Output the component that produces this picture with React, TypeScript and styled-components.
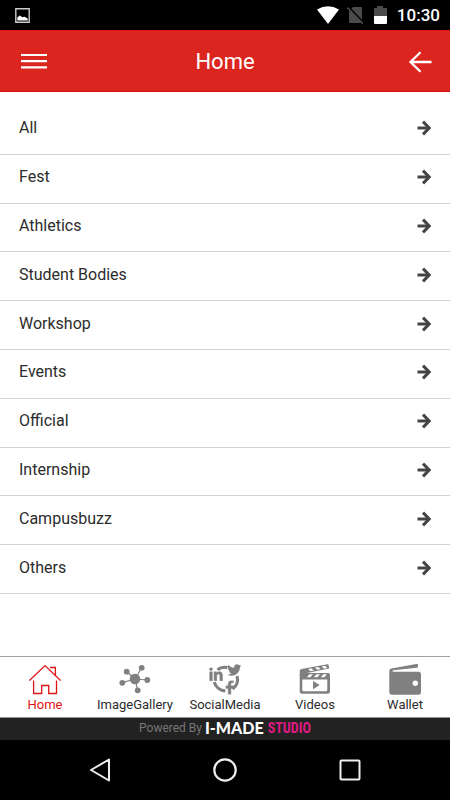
import React from "react";
import styled, { createGlobalStyle } from "styled-components";
import { FaFacebookF, FaLinkedinIn, FaTwitter } from "react-icons/fa";

const GlobalStyle = createGlobalStyle`
  *, *::before, *::after { box-sizing: border-box; }
  body {
    margin: 0;
    background: #fff;
    color: #222;
    font-family: Roboto, "Liberation Sans", sans-serif;
  }
`;

const Page = styled.div`
  display: flex;
  flex-direction: column;
  min-height: 100vh;
`;

const StatusBar = styled.div`
  display: flex;
  align-items: center;
  justify-content: space-between;
  height: 30px;
  padding: 0 10px 0 14px;
  background: #000;
`;

const StatusGroup = styled.div`
  display: flex;
  align-items: center;
  gap: 8px;
`;

const Clock = styled.time`
  color: #fff;
  font-size: 17px;
  font-weight: 500;
  line-height: 30px;
`;

const Header = styled.header`
  display: grid;
  grid-template-columns: 34px 1fr 34px;
  align-items: center;
  padding: 2px 13px 0 17px;
  height: 62px;
  background: #db261f;
  border-top: 1px solid #e5140f;
  border-bottom: 1px solid #d8100c;
`;

const Title = styled.h1`
  margin: 0;
  padding-right: 4px;
  color: #fff;
  font-size: 22px;
  font-weight: 400;
  line-height: 32px;
  text-align: center;
`;

const IconButton = styled.button`
  display: grid;
  place-items: center;
  width: 34px;
  height: 34px;
  padding: 0;
  border: 0;
  background: none;
  color: #fff;
  cursor: pointer;
`;

const Main = styled.main`
  flex: 1;
  padding: 14px 0 16px;
`;

const CategoryList = styled.ul`
  display: grid;
  grid-auto-rows: 1fr;
  min-height: 488px;
  margin: 0;
  padding: 0;
  list-style: none;
`;

const CategoryItem = styled.li`
  display: flex;
  border-bottom: 1px solid #d2d2d2;
`;

const CategoryLink = styled.a`
  flex: 1;
  display: flex;
  align-items: center;
  justify-content: space-between;
  padding: 0 18px 3px 19px;
  color: #2c2c2c;
  font-size: 16px;
  line-height: 24px;
  text-decoration: none;
`;

const TabBar = styled.nav`
  display: grid;
  grid-template-columns: repeat(5, 1fr);
  background: #fff;
  border-top: 1px solid #a0a0a0;
  border-bottom: 1px solid #8f9492;
`;

const Tab = styled.a<{ $active?: boolean }>`
  display: flex;
  flex-direction: column;
  align-items: center;
  gap: 2px;
  padding: 6px 0 4px;
  color: ${(p) => (p.$active ? "#dc1414" : "#2c2c2c")};
  font-size: 13px;
  line-height: 16px;
  text-decoration: none;
`;

const TabIcon = styled.svg<{ $active?: boolean }>`
  display: block;
  width: 32px;
  height: 32px;
  color: ${(p) => (p.$active ? "#dc1414" : "#808080")};
`;

const Credit = styled.footer`
  display: flex;
  align-items: center;
  justify-content: center;
  gap: 3px;
  height: 22px;
  padding-bottom: 3px;
  background: #222;
  color: #777;
  font-size: 12px;
  line-height: 20px;
`;

const Brand = styled.strong`
  display: flex;
  gap: 4px;
  color: #fff;
  font-family: Lato, sans-serif;
  font-size: 16px;
  font-weight: 900;
  line-height: 20px;
`;

const BrandAccent = styled.span`
  color: #df1a83;
  font-family: "Roboto Condensed", Roboto, sans-serif;
  font-size: 14px;
  font-weight: 700;
`;

const SystemNav = styled.nav`
  display: flex;
  align-items: center;
  justify-content: space-between;
  height: 60px;
  padding: 0 83px;
  background: #000;
`;

const categories = [
  "All",
  "Fest",
  "Athletics",
  "Student Bodies",
  "Workshop",
  "Events",
  "Official",
  "Internship",
  "Campusbuzz",
  "Others",
];

const HomeIcon = () => (
  <TabIcon $active viewBox="0 0 32 32" fill="none" stroke="currentColor" strokeWidth="1.3" aria-hidden="true">
    <path d="M.4 17.6 16 2.6l15.6 15M21 4.5h5.4v7.4M4.6 17.6v12.9h8.1v-8h7v8h7.8V17.6" />
  </TabIcon>
);

const GalleryIcon = () => (
  <TabIcon viewBox="0 0 32 32" fill="currentColor" aria-hidden="true">
    <path
      d="M16 16 7.7 8.7M16 16l6.7-11.3M16 16l12.3 1M16 16l2.7 11.3M16 16 3.3 19.7"
      stroke="currentColor"
      strokeWidth="1.2"
    />
    <circle cx="16" cy="16" r="5.3" />
    <circle cx="7.7" cy="8.7" r="2.9" />
    <circle cx="22.7" cy="4.8" r="2.9" />
    <circle cx="28.3" cy="17" r="2.9" />
    <circle cx="18.7" cy="27.3" r="2.9" />
    <circle cx="3.3" cy="19.8" r="2.9" />
  </TabIcon>
);

const SocialIcon = () => (
  <TabIcon viewBox="0 0 32 32" aria-hidden="true">
    <path
      d="M8.500 6.800A11.700 11.700 0 0 1 18.500 4.600M28 13A11.700 11.700 0 0 1 23.600 26M5.300 19.200A11.700 11.700 0 0 0 16.300 27.800"
      fill="none"
      stroke="currentColor"
      strokeWidth="3.200"
    />
    <FaLinkedinIn x="-0.500" y="4.500" size={15} stroke="currentColor" strokeWidth="14" />
    <FaTwitter x="18.300" y="0" size={14} />
    <FaFacebookF x="13.700" y="17.500" size={14} stroke="currentColor" strokeWidth="14" />
  </TabIcon>
);

const VideosIcon = () => (
  <TabIcon viewBox="0 0 32 32" fill="currentColor" aria-hidden="true">
    <path
      fillRule="evenodd"
      d="M.7 8Q.7 6.200 2.500 5.900L28.400 1.300Q29.400 1.100 29.600 2.100L30.300 5.400 8 10H29.300Q31 10 31 11.700V28.500Q31 30.700 28.800 30.700H2.900Q.7 30.700.7 28.500ZM3.300 16.500V26.700Q3.300 28.300 4.900 28.300H26.700Q28.300 28.300 28.300 26.700V16.500Z"
    />
    <path
      fill="#fff"
      d="m9.200 5.900 3.200-.6 2.400 2.200-3.200.7ZM16 4.600l3.200-.6 2.400 2.200-3.200.6ZM22.800 3.400l3.100-.6 2.500 2.200-3.300.7ZM10.400 11.200h3.500l-2.500 3H7.900ZM17.400 11.200h3.500l-2.500 3h-3.500ZM24.400 11.200h3.500l-2.500 3h-3.500Z"
    />
    <path d="m14 18 6.700 4.100L14 26.200Z" />
  </TabIcon>
);

const WalletIcon = () => (
  <TabIcon viewBox="0 0 32 32" fill="currentColor" aria-hidden="true">
    <path
      fillRule="evenodd"
      d="M.3 8Q.3 5.900 2.300 5.500L27.300.9Q28.900.6 29 2.200V3.600Q29 4.600 28 4.800L4.300 7.300Q3.400 7.400 3.600 8.200 3.800 8.800 4.800 8.800H29.500Q32 8.800 32 11.300V29Q32 31.700 29.300 31.700H3Q.3 31.700.3 29ZM26.300 17.500a2.700 2.700 0 1 0 0 5.400 2.700 2.700 0 0 0 0-5.400Z"
    />
  </TabIcon>
);

const tabs = [
  { label: "Home", Icon: HomeIcon, active: true },
  { label: "ImageGallery", Icon: GalleryIcon },
  { label: "SocialMedia", Icon: SocialIcon },
  { label: "Videos", Icon: VideosIcon },
  { label: "Wallet", Icon: WalletIcon },
];

const RowArrow = () => (
  <svg width="15" height="16" viewBox="0 0 15 16" fill="none" stroke="#444" strokeWidth="3" aria-hidden="true">
    <path d="M.5 8H12" />
    <path d="M6 1.600 12.200 8 6 14.400" />
  </svg>
);

export default function App() {
  return (
    <>
      <GlobalStyle />
      <Page>
        <StatusBar>
          <svg width="17" height="18" viewBox="0 0 17 18" aria-hidden="true">
            <path d="M1.800 2.800h13.400v13.400H1.800Z" fill="none" stroke="#ccc" strokeWidth="1.400" />
            <path d="M3.300 14.500v-3l2.500-2 2.500 1.700 2.200-.4 3.200 1.700v2Z" fill="#fff" />
          </svg>
          <StatusGroup>
            <svg width="22" height="18" viewBox="0 0 22 18" aria-hidden="true">
              <path d="M0 3.500Q11-3 22 3.500L11 18Z" fill="#fff" />
            </svg>
            <svg width="17" height="18" viewBox="0 0 17 18" aria-hidden="true">
              <path d="M6 1h8q1 0 1 1v15H3q-1 0-1-1V5.500Z" fill="#4b4b4b" />
              <path d="m1.600.8 15.500 16.500" stroke="#000" strokeWidth="1.800" />
              <path d="m.4 1.500 15.500 16.200" stroke="#4b4b4b" strokeWidth="1.500" />
            </svg>
            <StatusGroup>
              <svg width="17" height="18" viewBox="0 0 17 18" aria-hidden="true">
                <path d="M2 3q0-1 1-1h2V0h6v2h3q1 0 1 1v7H2Z" fill="#4b4b4b" />
                <path d="M2 10h13v7q0 1-1 1H3q-1 0-1-1Z" fill="#fff" />
              </svg>
              <Clock>10:30</Clock>
            </StatusGroup>
          </StatusGroup>
        </StatusBar>

        <Header>
          <IconButton type="button" aria-label="Menu">
            <svg width="26" height="18" viewBox="0 0 26 18" stroke="#fff" strokeWidth="2.200">
              <path d="M0 2h26M0 8.200h26M0 14.400h26" />
            </svg>
          </IconButton>
          <Title>Home</Title>
          <IconButton type="button" aria-label="Back">
            <svg width="24" height="24" viewBox="0 0 24 24" fill="none" stroke="#fff" strokeWidth="2.300">
              <path d="M23.500 12H2.500M12.500 2.200 2.500 12l10 9.800" />
            </svg>
          </IconButton>
        </Header>

        <Main>
          <CategoryList>
            {categories.map((name) => (
              <CategoryItem key={name}>
                <CategoryLink href="#">
                  {name}
                  <RowArrow />
                </CategoryLink>
              </CategoryItem>
            ))}
          </CategoryList>
        </Main>

        <TabBar aria-label="Sections">
          {tabs.map(({ label, Icon, active }) => (
            <Tab key={label} href="#" $active={active} aria-current={active ? "page" : undefined}>
              <Icon />
              {label}
            </Tab>
          ))}
        </TabBar>

        <Credit>
          Powered By
          <Brand>
            I-MADE <BrandAccent>STUDIO</BrandAccent>
          </Brand>
        </Credit>

        <SystemNav aria-label="System">
          <IconButton type="button" aria-label="System back">
            <svg width="24" height="24" viewBox="0 0 24 24" fill="none" stroke="#eee" strokeWidth="2" strokeLinejoin="round">
              <path d="M21 1.500v21L3 12Z" />
            </svg>
          </IconButton>
          <IconButton type="button" aria-label="System home">
            <svg width="24" height="24" viewBox="0 0 24 24" fill="none" stroke="#eee" strokeWidth="2.200">
              <circle cx="12" cy="12" r="10.700" />
            </svg>
          </IconButton>
          <IconButton type="button" aria-label="Recent apps">
            <svg width="24" height="24" viewBox="0 0 24 24" fill="none" stroke="#eee" strokeWidth="2">
              <rect x="2.500" y="2.500" width="19" height="19" rx="1" />
            </svg>
          </IconButton>
        </SystemNav>
      </Page>
    </>
  );
}
